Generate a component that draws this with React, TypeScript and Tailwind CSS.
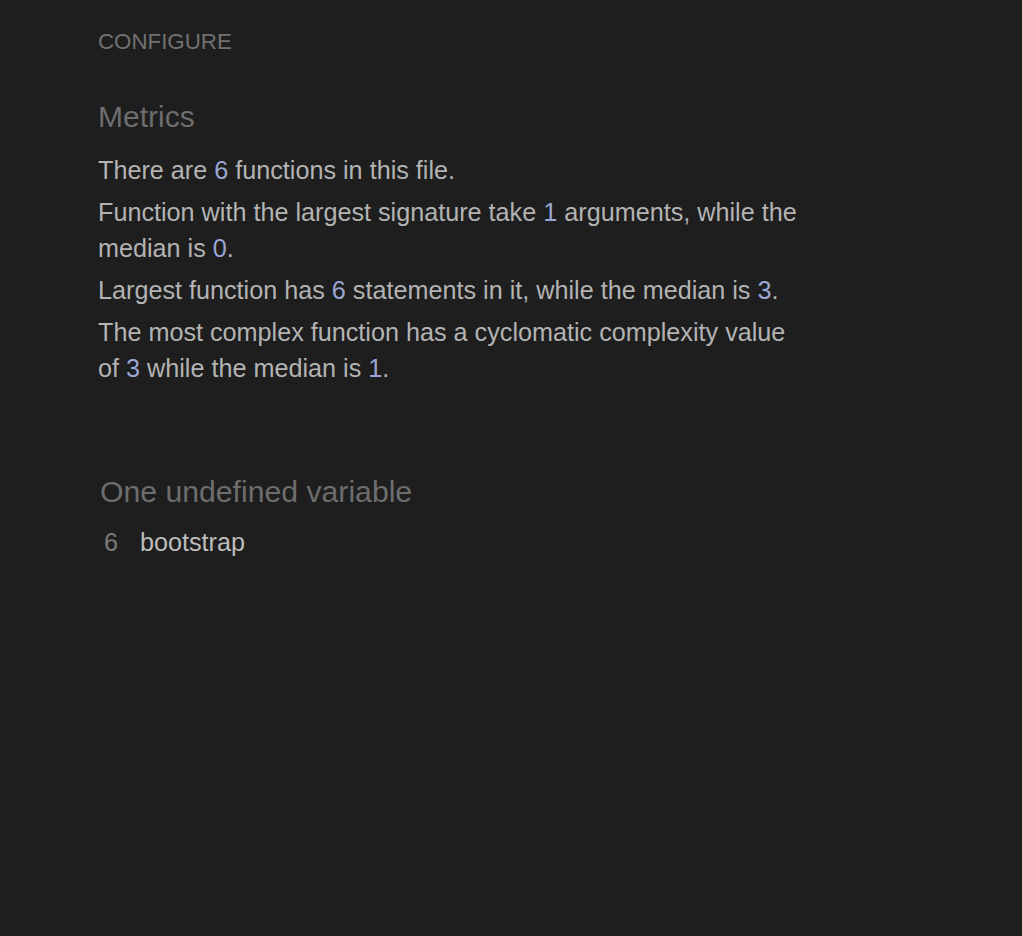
import React from "react";

const N = ({ children }: { children: React.ReactNode }) => (
  <span className="text-[#9aa6d4]">{children}</span>
);

export default function App() {
  return (
    <div
      className="min-h-[936px] w-full bg-[#1e1e1e] text-[#b3b3b3]"
      style={{ fontFamily: '"Liberation Sans", Arial, Helvetica, sans-serif' }}
    >
      <div className="pl-[98px] pt-[28px] w-[820px]">
        <div className="text-[22.3px] leading-[28px] text-[#717171]">CONFIGURE</div>
        <h2 className="mt-[43px] text-[30px] leading-[36px] text-[#6d6d6d]">Metrics</h2>
        <div className="mt-[17px] text-[25.2px] leading-[36px] flex flex-col gap-[6px] w-[710px]">
          <p>
            There are <N>6</N> functions in this file.
          </p>
          <p>
            Function with the largest signature take <N>1</N> arguments, while the median is <N>0</N>.
          </p>
          <p>
            Largest function has <N>6</N> statements in it, while the median is <N>3</N>.
          </p>
          <p>
            The most complex function has a cyclomatic complexity value of <N>3</N> while the median is <N>1</N>.
          </p>
        </div>
        <h2 className="mt-[88px] ml-[2px] text-[30.2px] leading-[36px] text-[#6d6d6d]">One undefined variable</h2>
        <div className="mt-[16px] ml-[6px] flex items-center text-[25.2px] leading-[32px]">
          <span className="w-[36px] text-[#7a7a7a]">6</span>
          <span className="text-[#bdbdbd]">bootstrap</span>
        </div>
      </div>
    </div>
  );
}
